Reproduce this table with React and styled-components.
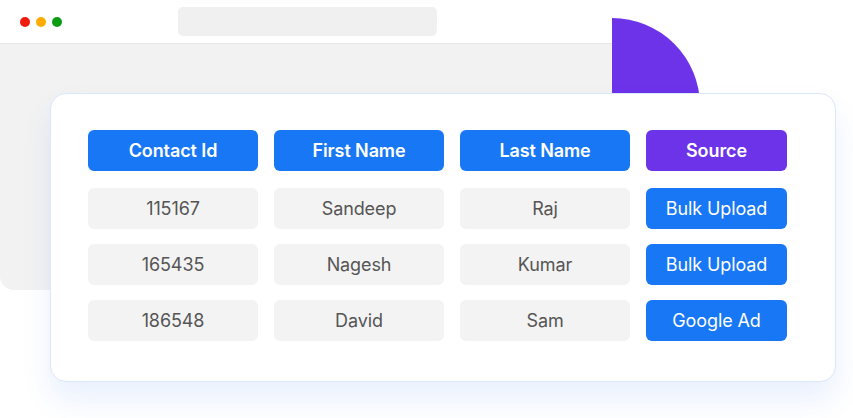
import React from 'react'
import styled, { createGlobalStyle } from 'styled-components'

const GlobalStyle = createGlobalStyle`
  html, body {
    margin: 0;
    padding: 0;
    background: #fff;
  }
  body {
    font-family: Inter, 'Noto Sans', sans-serif;
  }
`

const Scene = styled.div`
  position: relative;
  width: 853px;
  height: 418px;
  overflow: hidden;
  background: #fff;
`

const Blob = styled.div`
  position: absolute;
  left: 524px;
  top: 18px;
  width: 176px;
  height: 176px;
  border-radius: 50%;
  background: #6c33e9;
`

const Window = styled.div`
  position: relative;
  width: 612px;
  height: 290px;
  display: flex;
  flex-direction: column;
  background: #f2f2f2;
  border-bottom-right-radius: 14px;
  border-bottom-left-radius: 14px;
  overflow: hidden;
`

const TopBar = styled.div`
  height: 43px;
  flex: none;
  display: flex;
  align-items: center;
  background: #fff;
  border-bottom: 1px solid #e6e6e6;
  padding-left: 20px;
`

const Dots = styled.div`
  display: flex;
  gap: 6px;
  width: 158px;
`

const Dot = styled.span`
  width: 10px;
  height: 10px;
  border-radius: 50%;
  background: ${p => p.$color};
`

const Address = styled.div`
  width: 259px;
  height: 29px;
  border-radius: 5px;
  background: #f0f0f0;
`

const Card = styled.div`
  position: absolute;
  left: 50px;
  top: 93px;
  width: 786px;
  height: 289px;
  box-sizing: border-box;
  padding: 36px 0 0 37px;
  display: flex;
  flex-direction: column;
  gap: 17px;
  background: #fff;
  border: 1px solid #dbe7fb;
  border-radius: 16px;
  box-shadow: 0 18px 30px rgba(40, 110, 240, 0.1);
`

const Grid = styled.div`
  display: grid;
  grid-template-columns: 170px 170px 170px 141px;
  grid-auto-rows: 41px;
  column-gap: 16px;
  row-gap: 15px;
`

const Cell = styled.div`
  display: flex;
  align-items: center;
  justify-content: center;
  border-radius: 6px;
  font-size: 18px;
  letter-spacing: -0.1px;
  background: ${p => (p.$variant === 'source' ? '#6c33e9' : p.$variant === 'plain' ? '#f3f3f3' : '#1877f4')};
  color: ${p => (p.$variant === 'plain' ? '#555' : '#fff')};
  font-weight: ${p => (p.$variant === 'head' || p.$variant === 'source' ? 600 : 400)};
`

const headers = ['Contact Id', 'First Name', 'Last Name']

const rows = [
  ['115167', 'Sandeep', 'Raj', 'Bulk Upload'],
  ['165435', 'Nagesh', 'Kumar', 'Bulk Upload'],
  ['186548', 'David', 'Sam', 'Google Ad']
]

export default function App() {
  return (
    <Scene>
      <GlobalStyle />
      <Blob />
      <Window>
        <TopBar>
          <Dots>
            <Dot $color="#ee1b0e" />
            <Dot $color="#ffab00" />
            <Dot $color="#0a9c12" />
          </Dots>
          <Address />
        </TopBar>
      </Window>
      <Card>
        <Grid>
          {headers.map(h => (
            <Cell key={h} $variant="head">{h}</Cell>
          ))}
          <Cell $variant="source">Source</Cell>
        </Grid>
        <Grid>
          {rows.map(r => (
            <React.Fragment key={r[0]}>
              <Cell $variant="plain">{r[0]}</Cell>
              <Cell $variant="plain">{r[1]}</Cell>
              <Cell $variant="plain">{r[2]}</Cell>
              <Cell $variant="tag">{r[3]}</Cell>
            </React.Fragment>
          ))}
        </Grid>
      </Card>
    </Scene>
  )
}
